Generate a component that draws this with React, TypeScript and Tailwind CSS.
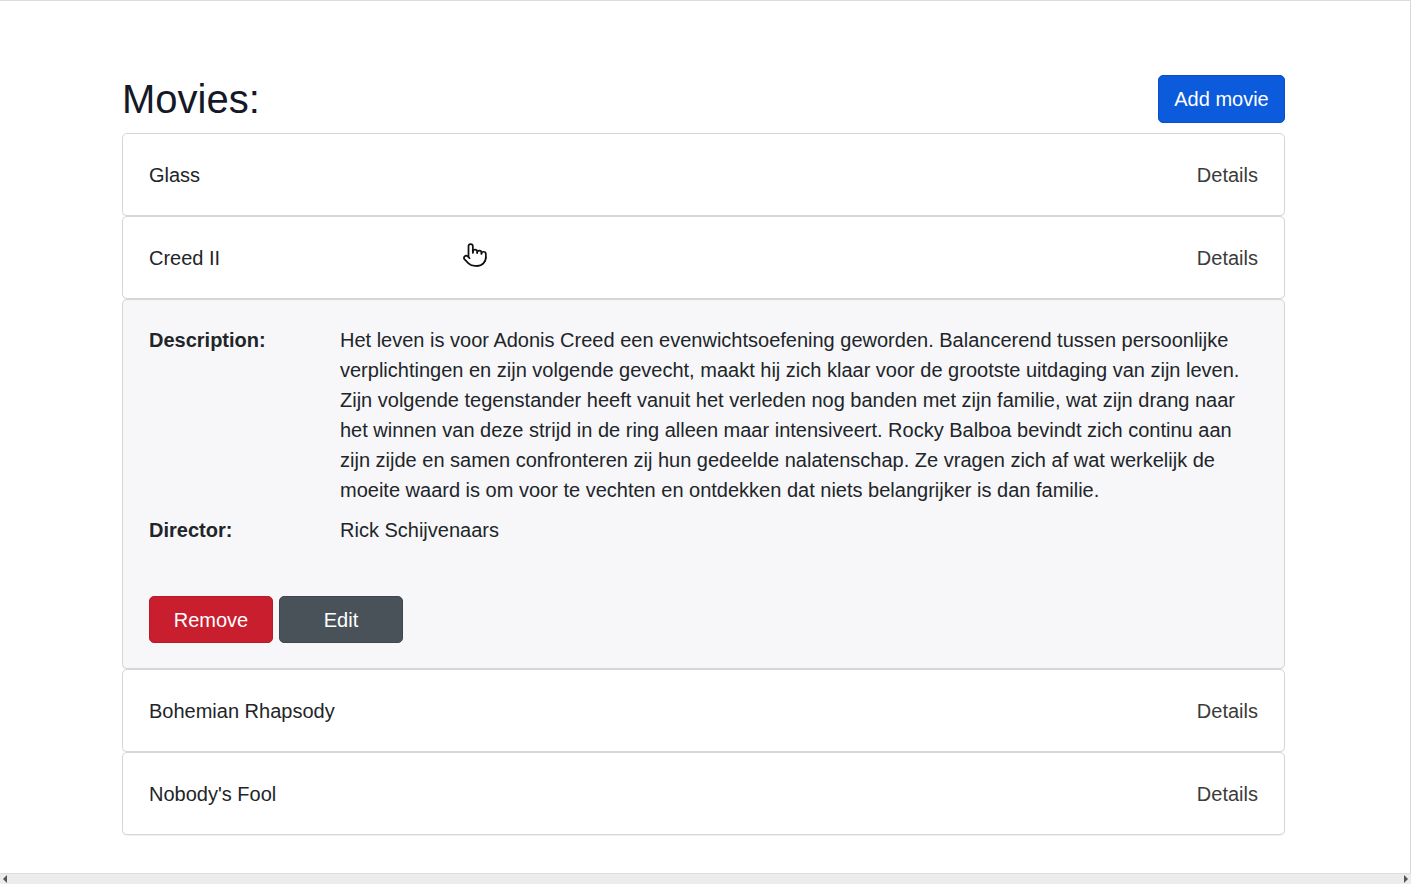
import React from "react";
import { Pointer } from "lucide-react";

const movies = ["Glass", "Creed II", "Bohemian Rhapsody", "Nobody's Fool"];

function Row({ title }: { title: string }) {
  return (
    <div className="flex h-[83px] items-center justify-between rounded-[5px] border border-[#d6d6d6] bg-white px-[26px] shadow-[0_1px_1px_rgba(0,0,0,0.06)]">
      <span className="text-[#212529]">{title}</span>
      <span className="text-[#3b3b3b]">Details</span>
    </div>
  );
}

function Expanded() {
  return (
    <div className="h-[370px] rounded-[5px] border border-[#d6d6d6] bg-[#f7f7f9] px-[26px] pt-[25px] shadow-[0_1px_1px_rgba(0,0,0,0.06)]">
      <div className="grid grid-cols-[191px_1fr] text-[#212529]">
        <div className="font-bold">Description:</div>
        <div className="mb-[10px] leading-[30px]">
          Het leven is voor Adonis Creed een evenwichtsoefening geworden. Balancerend tussen persoonlijke
          verplichtingen en zijn volgende gevecht, maakt hij zich klaar voor de grootste uitdaging van zijn leven.
          Zijn volgende tegenstander heeft vanuit het verleden nog banden met zijn familie, wat zijn drang naar het
          winnen van deze strijd in de ring alleen maar intensiveert. Rocky Balboa bevindt zich continu aan zijn zijde
          en samen confronteren zij hun gedeelde nalatenschap. Ze vragen zich af wat werkelijk de moeite waard is om
          voor te vechten en ontdekken dat niets belangrijker is dan familie.
        </div>
        <div className="font-bold">Director:</div>
        <div>Rick Schijvenaars</div>
      </div>
      <div className="mt-[51px] flex gap-[6px]">
        <button className="h-[47px] w-[124px] rounded-[5px] border border-[#b81a29] bg-[#c81e2e] text-white">
          Remove
        </button>
        <button className="h-[47px] w-[124px] rounded-[5px] border border-[#3f464d] bg-[#4a5259] text-white">
          Edit
        </button>
      </div>
    </div>
  );
}

export default function App() {
  return (
    <div className="relative flex h-screen flex-col bg-white font-['Liberation_Sans',Arial,sans-serif] text-[20px] leading-[30px]">
      <div className="h-px bg-[#dcdcdc]" />
      <div className="flex min-h-0 flex-1">
        <div className="flex-1 border-r border-[#d8d8d8] pt-[74px]">
          <div className="ml-[122px] w-[1163px]">
            <div className="mb-[10px] flex h-[48px] items-center justify-between">
              <h2 className="text-[40px] leading-[48px] text-[#151826]">Movies:</h2>
              <button className="h-[48px] w-[127px] rounded-[5px] border border-[#0a4fc4] bg-[#0b5bdc] text-white">
                Add movie
              </button>
            </div>
            <div className="flex flex-col">
              <Row title={movies[0]} />
              <Row title={movies[1]} />
              <Expanded />
              <Row title={movies[2]} />
              <Row title={movies[3]} />
            </div>
          </div>
        </div>
      </div>
      <div className="flex h-[11px] items-center justify-between border-t border-[#dddddd] bg-[#ececec] px-[3px]">
        <svg width="5" height="8" viewBox="0 0 5 8">
          <path d="M4 0 L0 4 L4 8 Z" fill="#555" />
        </svg>
        <svg width="5" height="8" viewBox="0 0 5 8">
          <path d="M1 0 L5 4 L1 8 Z" fill="#555" />
        </svg>
      </div>
      <div className="pointer-events-none absolute left-[462px] top-[242px]">
        <Pointer size={26} strokeWidth={1.6} color="#111" fill="#fff" />
      </div>
    </div>
  );
}
